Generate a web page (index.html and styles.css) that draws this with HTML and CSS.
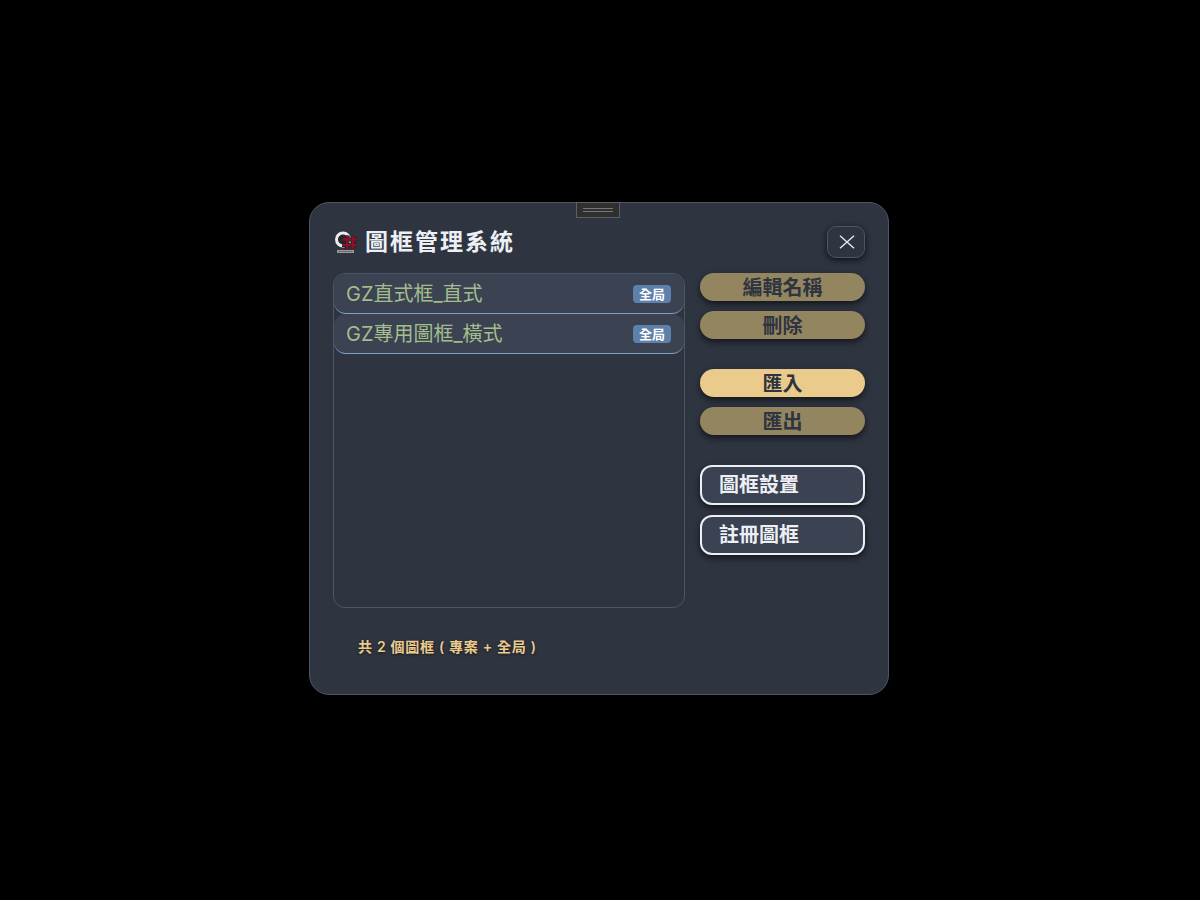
FILE: index.html
```html
<!DOCTYPE html>
<html lang="zh-Hant">
<head>
<meta charset="utf-8">
<title>圖框管理系統</title>
<link rel="stylesheet" href="styles.css">
</head>
<body>
<main class="dialog">
  <div class="handle"><span class="handle-lines"></span></div>
  <header class="head">
    <div class="title-wrap">
      <svg class="logo" width="24" height="24" viewBox="0 0 24 24">
        <circle cx="9" cy="9.5" r="6.5" fill="#23262d" stroke="#ececec" stroke-width="3"/>
        <path d="M8.5 9.5h15M8 15h15M13.8 5.5l-1 14M19.6 5.5l-1 14" fill="none" stroke="#23262d" stroke-width="4"/>
        <path d="M8.5 9.5h15M8 15h15M13.8 5.5l-1 14M19.6 5.5l-1 14" fill="none" stroke="#8e1128" stroke-width="2.2"/>
        <rect x="3" y="20" width="17" height="3" fill="#9a9a9a"/>
        <path d="M4.5 21.5h14" stroke="#55585f" stroke-width="1" stroke-dasharray="2 1"/>
      </svg>
      <h1 class="title">圖框管理系統</h1>
    </div>
    <button class="close" aria-label="關閉">
      <svg class="close-icon" width="16" height="14" viewBox="0 0 16 14"><path d="M1 .8l14 12.4M15 .8L1 13.2" fill="none" stroke="#e5e9f0" stroke-width="1.4"/></svg>
    </button>
  </header>
  <div class="body">
    <section class="list">
      <div class="item"><span class="name">GZ直式框_直式</span><span class="badge">全局</span></div>
      <div class="item"><span class="name">GZ專用圖框_橫式</span><span class="badge">全局</span></div>
    </section>
    <aside class="actions">
      <div class="group">
        <button class="pill dim">編輯名稱</button>
        <button class="pill dim">刪除</button>
      </div>
      <div class="group">
        <button class="pill">匯入</button>
        <button class="pill dim">匯出</button>
      </div>
      <div class="group">
        <button class="outline">圖框設置</button>
        <button class="outline">註冊圖框</button>
      </div>
    </aside>
  </div>
  <footer class="status">共 2 個圖框 ( 專案 + 全局 )</footer>
</main>
</body>
</html>
```
FILE: styles.css
```css
* { box-sizing: border-box; }
html, body { margin: 0; height: 100%; background: #000; }
body {
  padding: 202px 0 0 309px;
  font-family: Inter, "Noto Sans CJK TC", sans-serif;
}
.dialog {
  position: relative;
  width: 580px;
  height: 493px;
  padding: 23px 23px 0;
  background: #2e3440;
  border: 1px solid #4c566a;
  border-radius: 20px;
}
.handle {
  position: absolute;
  top: -1px;
  left: 266px;
  width: 44px;
  height: 16px;
  background: #2f2f2f;
  border: 1px solid #5f5f5f;
  display: flex;
  align-items: center;
  justify-content: center;
}
.handle-lines {
  width: 30px;
  height: 4px;
  border-top: 1px solid #777;
  border-bottom: 1px solid #777;
}
.head {
  display: flex;
  justify-content: space-between;
  align-items: center;
  height: 32px;
}
.title-wrap { display: flex; align-items: center; gap: 7px; padding-left: 1px; }
.logo { display: block; flex: none; }
.title {
  margin: 0;
  font-size: 23px;
  font-weight: 600;
  letter-spacing: 2px;
  color: #eceff4;
  line-height: 32px;
}
.close {
  width: 38px;
  height: 32px;
  padding: 0 0 0 1px;
  display: flex;
  align-items: center;
  justify-content: center;
  background: #2e3440;
  border: 1px solid #4c566a;
  border-radius: 9px;
  box-shadow: 0 2px 6px rgba(0,0,0,.7);
}
.body {
  display: flex;
  gap: 15px;
  margin-top: 15px;
}
.list {
  width: 352px;
  height: 335px;
  border: 1px solid #4c566a;
  border-radius: 12px;
  background: #2e3440;
}
.item {
  height: 40px;
  display: flex;
  align-items: center;
  justify-content: space-between;
  padding: 0 13px 0 12px;
  background: #3b4252;
  border-bottom: 1px solid #81a1c1;
  border-radius: 12px;
}
.name { font-size: 20px; color: #a3be8c; line-height: 28px; }
.badge {
  width: 38px;
  height: 18px;
  border-radius: 4px;
  background: #5e81ac;
  color: #fff;
  font-size: 13px;
  font-weight: 600;
  line-height: 18px;
  text-align: center;
}
.actions {
  width: 165px;
  display: flex;
  flex-direction: column;
  gap: 30px;
}
.group { display: flex; flex-direction: column; gap: 10px; }
.pill {
  height: 28px;
  padding: 2px 0 0;
  border: 0;
  border-radius: 14px;
  background: #ebcb8b;
  color: #2e3440;
  font: 600 20px/26px Inter, "Noto Sans CJK TC", sans-serif;
  box-shadow: 0 3px 6px rgba(0,0,0,.6);
}
.pill.dim { background: #938560; }
.outline {
  height: 40px;
  padding: 0 0 0 17px;
  text-align: left;
  background: #3b4252;
  border: 2px solid #eceff4;
  border-radius: 12px;
  color: #eceff4;
  font: 600 20px/36px Inter, "Noto Sans CJK TC", sans-serif;
  box-shadow: 0 3px 6px rgba(0,0,0,.6);
}
.status {
  margin: 29px 0 0 25px;
  font-size: 14px;
  font-weight: 600;
  letter-spacing: .7px;
  line-height: 20px;
  color: #ebcb8b;
  text-shadow: 0 1px 3px rgba(0,0,0,.5);
}
```
